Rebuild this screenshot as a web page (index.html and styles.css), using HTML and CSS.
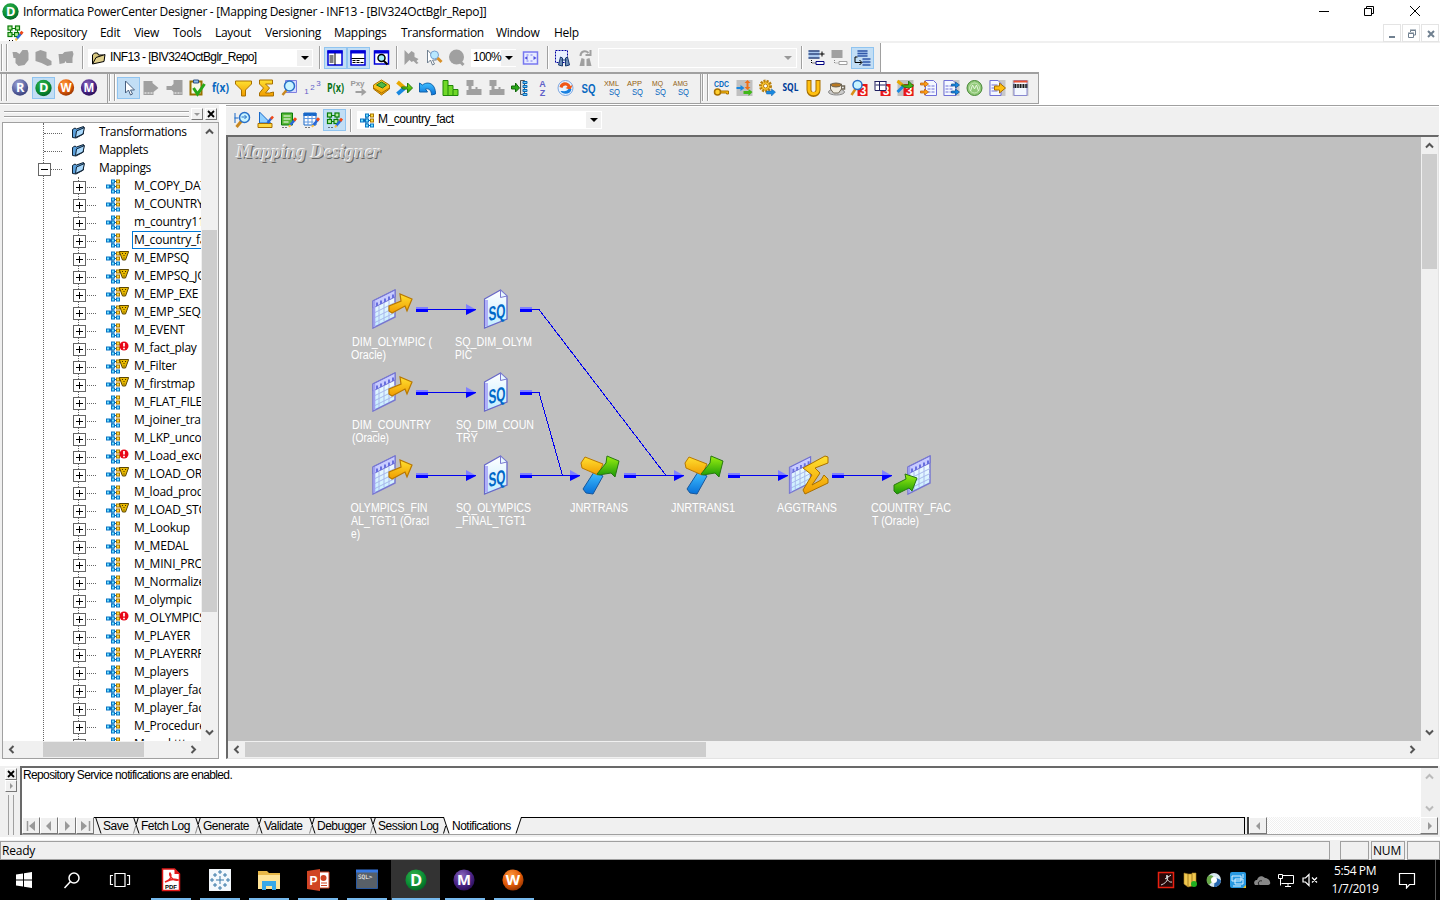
FILE: index.html
```html
<!DOCTYPE html>
<html lang="en">
<head>
<meta charset="utf-8">
<title>Informatica PowerCenter Designer</title>
<link rel="stylesheet" href="styles.css">
</head>
<body>
<svg class="defs" width="0" height="0">
  <defs>
    <radialGradient id="gG" cx=".4" cy=".3" r=".75"><stop offset="0" stop-color="#35b04c"/><stop offset=".6" stop-color="#0a8f35"/><stop offset="1" stop-color="#056022"/></radialGradient>
    <radialGradient id="gR" cx=".4" cy=".3" r=".75"><stop offset="0" stop-color="#a0a6d6"/><stop offset=".6" stop-color="#5d66a4"/><stop offset="1" stop-color="#353c76"/></radialGradient>
    <radialGradient id="gW" cx=".4" cy=".3" r=".75"><stop offset="0" stop-color="#ff9a40"/><stop offset=".6" stop-color="#e05a08"/><stop offset="1" stop-color="#8e3000"/></radialGradient>
    <radialGradient id="gM" cx=".4" cy=".3" r=".75"><stop offset="0" stop-color="#8a68bc"/><stop offset=".6" stop-color="#4a2486"/><stop offset="1" stop-color="#260c52"/></radialGradient>
    <linearGradient id="gy" x1="0" y1="0" x2="0" y2="1"><stop offset="0" stop-color="#ffe030"/><stop offset="1" stop-color="#f09c00"/></linearGradient>
    <linearGradient id="gg" x1="0" y1="0" x2="0" y2="1"><stop offset="0" stop-color="#9cf010"/><stop offset="1" stop-color="#189808"/></linearGradient>
    <linearGradient id="gb" x1="0" y1="0" x2="0" y2="1"><stop offset="0" stop-color="#40c0ff"/><stop offset="1" stop-color="#0870d8"/></linearGradient>
    <linearGradient id="gt" x1="0" y1="0" x2="0" y2="1"><stop offset="0" stop-color="#ffffff"/><stop offset="1" stop-color="#c0ecff"/></linearGradient>
  </defs>
  <symbol id="ballD" viewBox="0 0 20 20"><circle cx="10" cy="10" r="9.6" fill="url(#gG)"/><text x="10.2" y="15" class="ball">D</text></symbol>
  <symbol id="ballR" viewBox="0 0 20 20"><circle cx="10" cy="10" r="9.6" fill="url(#gR)"/><text x="10.2" y="15" class="ball">R</text></symbol>
  <symbol id="ballW" viewBox="0 0 20 20"><circle cx="10" cy="10" r="9.6" fill="url(#gW)"/><text x="10" y="14.800" class="ball w">W</text></symbol>
  <symbol id="ballM" viewBox="0 0 20 20"><circle cx="10" cy="10" r="9.6" fill="url(#gM)"/><text x="10" y="14.800" class="ball w">M</text></symbol>
  <symbol id="map" viewBox="0 0 15 15">
    <path d="M4 7.500h8M7 2.500h5M7 12.500h5M7 3L4 7M7 12L4 8M7 4v7" stroke="#0866b0" fill="none"/>
    <g fill="#70e0ff" stroke="#0874c4"><rect x=".5" y="6" width="3" height="3"/><rect x="5.500" y="1" width="3" height="3"/><rect x="5.500" y="6" width="3" height="3"/><rect x="5.500" y="11" width="3" height="3"/><rect x="10.500" y="11" width="3" height="3"/></g>
    <g fill="#ffe040" stroke="#a87400"><rect x="10.500" y="1" width="3" height="3"/><rect x="10.500" y="6" width="3" height="3"/></g>
  </symbol>
  <symbol id="warn" viewBox="0 0 10 10"><path d="M.3.500h9.400L6.500 9h-3z" fill="#e8b800" stroke="#5c4600"/><path d="M3 2.500h1M6 2.500h1M4.500 4.500h1M4.500 7h1" stroke="#403000"/></symbol>
  <symbol id="err" viewBox="0 0 10 10"><circle cx="5" cy="5" r="4.500" fill="#e80818"/><path d="M5 2v3.500M5 6.800v1.400" stroke="#fff" stroke-width="1.700"/></symbol>
  <symbol id="folder" viewBox="0 0 15 14"><path d="M1.500 12.500V4.500L4 3l1.500 1L12.500 1.500V9L5 13z" fill="#5aa0dc" stroke="#102030"/><path d="M4.500 12.500L5.500 6 13.500 2.500 12 9z" fill="#a8d8fc" stroke="#102030"/></symbol>
  <symbol id="grn" viewBox="0 0 18 18"><path d="M5 4.500h6M5 10.500h6M4.500 5v5M11.500 5v5" stroke="#087a08"/><g fill="#b8f0a0" stroke="#087a08" stroke-width="1.200"><rect x="2" y="2" width="4" height="4"/><rect x="9.500" y="2" width="4" height="4"/><rect x="2" y="8.500" width="4" height="4"/><rect x="8.500" y="8.500" width="4" height="4"/></g><path d="M10.500 15l5-6" stroke="#2868d8" stroke-width="2.600"/><path d="M14.500 10l2-2.400" stroke="#f04818" stroke-width="2.800"/><path d="M9.500 16.300l1.600-2" stroke="#ffc040" stroke-width="2"/><path d="M3 16.500h6" stroke="#000" stroke-dasharray="1 2"/></symbol>
  <symbol id="pencil" viewBox="0 0 18 18"><path d="M10.500 14.500l5-6" stroke="#2868d8" stroke-width="2.600"/><path d="M14.500 9.500l2-2.400" stroke="#f04818" stroke-width="2.800"/><path d="M9.500 16l1.600-2" stroke="#ffc040" stroke-width="2"/><path d="M3 16.500h6" stroke="#000" stroke-dasharray="1 2"/></symbol>
  <symbol id="up" viewBox="0 0 15 15"><path d="M4 9.500L7.500 6 11 9.500" fill="none" stroke="currentColor" stroke-width="2"/></symbol>
  <symbol id="dn" viewBox="0 0 15 15"><path d="M4 5.500L7.500 9 11 5.500" fill="none" stroke="currentColor" stroke-width="2"/></symbol>
  <symbol id="lf" viewBox="0 0 15 15"><path d="M9.500 4L6 7.500 9.500 11" fill="none" stroke="currentColor" stroke-width="2"/></symbol>
  <symbol id="rt" viewBox="0 0 15 15"><path d="M5.500 4L9 7.500 5.500 11" fill="none" stroke="currentColor" stroke-width="2"/></symbol>
  <symbol id="sep" viewBox="0 0 8 17"><path d="M0 0H1.500L7 16.500H0z" fill="#f0f0f0"/><path d="M1.500 0L7 16.500M6.500 0L4.300 7" stroke="#000" fill="none"/><path d="M3.700 9L1.500 16.500" stroke="#888"/><path d="M0 .5h8" stroke="#000"/></symbol>
  <symbol id="table" viewBox="0 0 25 40"><path d="M1 12L23 1v27L1 39z" fill="url(#gt)" stroke="#7878d0" stroke-width="1.500"/><path d="M1 12L23 1v7L1 19z" fill="#c8ccff" stroke="#7070d0"/><path d="M5 17V13.500M9 15v-3.500M13 13V9.500M17 11V7.500M21 9V5.500" stroke="#6870e0" stroke-width="2"/><path d="M2 24L23 13.500M2 29L23 18.500M2 34L23 23.500M7 17v18M12 14v18M17 12v18" stroke="#a8b8ec" fill="none"/><path d="M2.300 12v26" stroke="#a0a0f0" stroke-width="2"/></symbol>
  <symbol id="src" viewBox="0 0 42 40"><use href="#table" width="25" height="40"/><path d="M17 17L29 12 28 5 40 10 35 22 33 17 20 24 17 22z" fill="url(#gy)" stroke="#b87800" stroke-width="1.200"/></symbol>
  <symbol id="sqi" viewBox="0 0 25 40"><path d="M1 10L17 1l6.500 6v23L1 39z" fill="url(#gt)" stroke="#6868c8" stroke-width="1.300"/><path d="M3 11v26" stroke="#b0b0f8" stroke-width="3"/><path d="M17 1v7.500L23.500 7z" fill="#e8f8ff" stroke="#7878d0"/><text transform="translate(5 32) skewY(-12)" class="sqt" textLength="17" lengthAdjust="spacingAndGlyphs">SQ</text></symbol>
  <symbol id="jnr" viewBox="0 0 40 40"><path d="M3 34L14 17l9 4-10 18-7-1z" fill="url(#gb)" stroke="#18589c"/><path d="M1 8L5 2l18 7-5 11L2 13z" fill="url(#gy)" stroke="#b87800"/><path d="M17 19L26 8l1-7 12 5-4 16-4-4-12 2z" fill="url(#gg)" stroke="#287810"/></symbol>
  <symbol id="agg" viewBox="0 0 41 40"><use href="#table" width="25" height="38" y="1"/><path d="M15 13L37 1l3 1v6l-13 5 5 5-8 12 9-5 3-5 4 4v4L17 39l-2-4 9-15z" fill="url(#gy)" stroke="#a87000"/></symbol>
  <symbol id="tgt" viewBox="0 0 40 40"><use href="#table" width="25" height="40" x="14"/><path d="M1 30l12-6-1-5 12 4-5 13-3-3-12 6-3-3z" fill="url(#gg)" stroke="#287810"/></symbol>
</svg>

<header class="titlebar">
  <svg width="17" height="17"><use href="#ballD"/></svg>
  <span class="title">Informatica PowerCenter Designer - [Mapping Designer - INF13 - [BIV324OctBglr_Repo]]</span>
  <svg class="winbtns" width="110" height="20" fill="none" stroke="#000"><path d="M3 10.500h10M48.500 7.500h7v7h-7zM50.500 7.500v-2h7v7h-2M94 5l10 10M104 5l-10 10"/></svg>
</header>
<nav class="menubar">
  <svg width="18" height="18"><use href="#grn"/></svg>
  <span style="width:56px">Repository</span><span style="width:20px">Edit</span><span style="width:25px">View</span><span style="width:28px">Tools</span><span style="width:36px">Layout</span><span style="width:55px">Versioning</span><span style="width:53px">Mappings</span><span style="width:81px">Transformation</span><span style="width:44px">Window</span><span style="width:26px">Help</span>
  <div class="mdi">
    <svg width="18" height="18"><path d="M5 12h6" stroke="#708090" stroke-width="2"/></svg>
    <svg width="18" height="18" fill="none" stroke="#708090"><path d="M5.500 8.500h5v4h-5zM5 8h6M7.500 7V5.500h5V10H11M7 5h6"/></svg>
    <svg width="18" height="18"><path d="M6 6l6 6M12 6l-6 6" stroke="#708090" stroke-width="2"/></svg>
  </div>
</nav>

<section class="bar bar1">
  <i class="grip"></i>
  <svg class="ic" viewBox="0 0 18 18"><path d="M1 3h4l3 2 3-4h5l1 3v7l-4 5-6 1-3-3V9H2z" fill="#a0a0a0"/></svg>
  <svg class="ic" viewBox="0 0 18 18"><path d="M1 3l5-2 6 2v6l5 3v4l-4 1-6-3-6-2z" fill="#a0a0a0"/></svg>
  <svg class="ic" viewBox="0 0 18 18"><path d="M1 5h4l2-2 8-1 1 3-1 4v5H9l-1-2-1 2-5 1z" fill="#a0a0a0"/></svg>
  <i class="vsep s1"></i>
  <div class="combo repo"><svg width="16" height="16"><path d="M1.500 14V5l2-2h3l1 2h5v2" fill="#d8c880" stroke="#000"/><path d="M1.500 14L5 7.500l9-3-1 7z" fill="#e0d08c" stroke="#000"/></svg><span>INF13 - [BIV324OctBglr_Repo]</span><i class="dd"></i></div>
  <i class="vsep s2"></i>
  <svg class="ic on" viewBox="0 0 18 18"><path d="M1.500 2h14v14h-14z" fill="#fff" stroke="#0000d8" stroke-width="1.500"/><path d="M1 3h15" stroke="#0000d8" stroke-width="3"/><path d="M8.500 4v12M3 7h4M3 9h4M3 11h4M3 13h4" stroke="#000"/></svg>
  <svg class="ic on" viewBox="0 0 18 18"><path d="M1.500 2h14v14h-14z" fill="#fff" stroke="#0000d8" stroke-width="1.500"/><path d="M1 3h15" stroke="#0000d8" stroke-width="3"/><path d="M2 9.500h13" stroke="#000"/><path d="M3 11.500h8M3 13.500h11" stroke="#000" stroke-dasharray="3 1"/></svg>
  <svg class="ic" viewBox="0 0 18 18"><path d="M2 2h14v13H2z" fill="#fff" stroke="#0000d8" stroke-width="1.500"/><path d="M2 3h14" stroke="#0000d8" stroke-width="3"/><circle cx="9" cy="9" r="3.500" fill="#a0f0f8" stroke="#000" stroke-width="1.500"/><path d="M11 11.500l4 4" stroke="#000" stroke-width="2"/></svg>
  <i class="vsep s3"></i>
  <svg class="ic" viewBox="0 0 18 18"><path d="M3 1l4 4 3-3 3 2v4l4 2-2 2 2 2-2 1-3-3-2 1-2-2-2 2-3 3z" fill="#a0a0a0"/></svg>
  <svg class="ic" viewBox="0 0 18 18"><path d="M3 1v13l3-3 2 5 2-1-2-4h4z" fill="#fff" stroke="#708090"/><circle cx="10" cy="6" r="4" fill="#b8e8ff" stroke="#78a0d0"/><path d="M13 9l4 4" stroke="#d89028" stroke-width="3"/></svg>
  <svg class="ic" viewBox="0 0 18 18"><circle cx="9" cy="8" r="7.500" fill="#a0a0a0"/><path d="M12 12l4 4" stroke="#a0a0a0" stroke-width="3"/></svg>
  <div class="combo zoom"><span>100%</span><i class="dd"></i></div>
  <svg class="ic z" viewBox="0 0 18 18"><path d="M2 3h14v12H2z" fill="#e8ecff" stroke="#7878f0" stroke-width="1.500"/><path d="M3 9l3-2v4zM15 9l-3-2v4z" fill="#5050e0"/><path d="M5 6h8M5 12h8" stroke="#7878f0" stroke-dasharray="2 2"/></svg>
  <i class="vsep s4"></i>
  <svg class="ic" viewBox="0 0 18 18"><path d="M2 1.500h12v12H2z" fill="#e8f0ff" stroke="#0000a0" stroke-dasharray="2 1"/><path d="M5 16l2-8 2 1v8zM16 16l-2-8-2 1v8zM8 11h5" fill="#7090b8" stroke="#183870"/></svg>
  <svg class="ic" viewBox="0 0 18 18"><path d="M3 17l2-8 3 1v7zM15 17l-2-8-3 1v7z" fill="#a0a0a0"/><path d="M4 7c0-5 5-6 8-3M14 1v5H9" fill="none" stroke="#a0a0a0" stroke-width="2"/></svg>
  <div class="combo off"><i class="dd"></i></div>
  <i class="vsep s5"></i>
  <svg class="ic" viewBox="0 0 18 18"><path d="M1 1.500h11v8H1z" fill="#a8c8f0"/><path d="M1 2h11M1 5h11M1 9h11" stroke="#304880" stroke-width="1.500"/><path d="M12 5h5M14.500 2.500v5" stroke="#000"/><path d="M4 11v3h4" stroke="#000" stroke-dasharray="1 1" fill="none"/><path d="M8.500 12.500h8v3h-8z" fill="#fff" stroke="#000080"/></svg>
  <svg class="ic" viewBox="0 0 18 18"><path d="M1 1h11v8H1z" fill="#a0a0a0"/><path d="M4 11v3h4" stroke="#888" stroke-dasharray="1 1" fill="none"/><path d="M8.500 12.500h8v3h-8z" fill="#fff" stroke="#a0a0a0"/></svg>
  <svg class="ic on" viewBox="0 0 18 18"><path d="M4 1h10v6H4zM9 10h7v6H9z" fill="#a8c8f0"/><path d="M4 2h10M4 4.500h10M4 7h10M9 10h8M9 13h8M9 16h8" stroke="#3058a8" stroke-width="1.500"/><path d="M4 8H1.500v5.500H8M6 11l2.500 2.500L6 16" stroke="#000" fill="none"/></svg>
</section>

<section class="row2">
  <div class="bar barR">
    <i class="grip"></i>
    <svg class="ic" viewBox="0 0 18 18"><use href="#ballR" x="0" y="0" width="17" height="17"/></svg>
    <svg class="ic on" viewBox="0 0 18 18"><use href="#ballD" x=".5" y=".5" width="17" height="17"/></svg>
    <svg class="ic" viewBox="0 0 18 18"><use href="#ballW" x="0" y="0" width="17" height="17"/></svg>
    <svg class="ic" viewBox="0 0 18 18"><use href="#ballM" x="0" y="0" width="17" height="17"/></svg>
  </div>
  <div class="bar barT">
    <i class="grip"></i>
    <svg class="ic on" viewBox="0 0 18 18"><path d="M6 2v12l3-3 2 5 2-1-2-4h4z" fill="#fff" stroke="#486080"/></svg>
    <svg class="ic" viewBox="0 0 18 18"><path d="M1 2h9v2l6 5-5 4v3H1z" fill="#a0a0a0"/><path d="M2 14h8" stroke="#fff" stroke-dasharray="2 1"/></svg>
    <svg class="ic" viewBox="0 0 18 18"><path d="M8 1h9v15H8v-3l-2-2H1V7h5l2-2z" fill="#a0a0a0"/><path d="M9 14h7" stroke="#fff" stroke-dasharray="2 1"/></svg>
    <svg class="ic" viewBox="0 0 18 18"><path d="M2 2.500h11v13H2z" fill="#f8f8e8" stroke="#987000" stroke-width="2"/><path d="M5 1h5v3H5z" fill="#88b8e8" stroke="#305080"/><path d="M5 9l4 6L16 5" fill="none" stroke="#28a818" stroke-width="3"/></svg>
    <svg class="ic" viewBox="0 0 18 18"><text x="9" y="12.500" class="t blue big" textLength="17" lengthAdjust="spacingAndGlyphs">f(x)</text></svg>
    <svg class="ic" viewBox="0 0 18 18"><path d="M1 2h16v3l-6 6v6H7v-6L1 5z" fill="url(#gy)" stroke="#a87000"/></svg>
    <svg class="ic" viewBox="0 0 18 18"><path d="M2 1h13v4H8l4 4-4 5h4l4-1v4H2v-3l4-5-4-4z" fill="url(#gy)" stroke="#a87000"/></svg>
    <svg class="ic" viewBox="0 0 18 18"><path d="M5 1.500h11v12H5z" fill="#d8dcff" stroke="#8080e0"/><path d="M7 10l-5 6" stroke="#c88820" stroke-width="2.500"/><circle cx="9" cy="7" r="5" fill="#c8f4ff" stroke="#2870c8" stroke-width="1.500"/></svg>
    <svg class="ic" viewBox="0 0 18 18"><text x="3" y="15" class="t per">1</text><text x="9" y="11" class="t per">2</text><text x="15" y="7" class="t per">3</text></svg>
    <svg class="ic" viewBox="0 0 18 18"><text x="9" y="12.500" class="t green big" textLength="17" lengthAdjust="spacingAndGlyphs">P(x)</text></svg>
    <svg class="ic" viewBox="0 0 18 18"><text x="8" y="7" class="t gray" textLength="14">Pxy</text><path d="M6 12h6V9l5 4-5 4v-3H6z" fill="#a0a0a0"/></svg>
    <svg class="ic" viewBox="0 0 18 18"><path d="M1 6l8-5 8 5v4l-8 6-8-6z" fill="url(#gy)" stroke="#a87000"/><path d="M4 6l5-3 5 3-4 3z" fill="#50b848" stroke="#207818"/><path d="M1 9l8 5 8-5" fill="none" stroke="#a87000"/></svg>
    <svg class="ic" viewBox="0 0 18 18"><path d="M2 3l7 6" stroke="#e8a800" stroke-width="4"/><path d="M2 15l7-6" stroke="#1888e0" stroke-width="4"/><path d="M6 8h6V4l5 5-5 5v-4H7z" fill="url(#gg)" stroke="#287810"/></svg>
    <svg class="ic" viewBox="0 0 18 18"><path d="M1 4l3 2c5-4 13-2 13 9l-4 1c0-5-3-7-6-6l2 3H1z" fill="url(#gb)" stroke="#1060a8"/></svg>
    <svg class="ic" viewBox="0 0 18 18"><path d="M1.500 1.500h5v5h5v4h5v6h-15zM6.500 6v10M11.500 11v5" fill="#70d828" stroke="#208808"/></svg>
    <svg class="ic" viewBox="0 0 18 18"><path d="M2 1h7v6H7v3h4V8h2v2h4v6H2v-5h2V7H2z" fill="#a0a0a0"/></svg>
    <svg class="ic" viewBox="0 0 18 18"><path d="M2 1h7v6H7v3h4V8h2v2h4v6H2v-5h2V7H2z" fill="#a0a0a0"/></svg>
    <svg class="ic" viewBox="0 0 18 18"><path d="M1 7h4V4l4 5-4 4v-3H1z" fill="#28a818" stroke="#106808"/><path d="M10 1.500h4v14h-4z" fill="#ddd" stroke="#555"/><path d="M12.500 2.500h4v2h-4zM12.500 6.500h4v2h-4zM12.500 10.500h4v2h-4zM12.500 14.500h4v2h-4z" fill="#70c8f0" stroke="#0868b8"/></svg>
    <svg class="ic" viewBox="0 0 18 18"><text x="9" y="8" class="t per b">A</text><text x="9" y="16.500" class="t per b">Z</text></svg>
    <svg class="ic" viewBox="0 0 18 18"><circle cx="9" cy="9" r="7.500" fill="#e8f4ff" stroke="#80a8e0"/><path d="M3 8c1-6 9-6 11-1l2-1-2 5-5-2 2-1c-1-2-4-2-5 1z" fill="#f05818"/><path d="M15 10c-1 6-9 6-11 2 3 0 6 1 8-2z" fill="#1880e0"/></svg>
    <svg class="ic" viewBox="0 0 18 18"><text x="9" y="13.500" class="t blue sq" textLength="14" lengthAdjust="spacingAndGlyphs">SQ</text></svg>
    <svg class="ic" viewBox="0 0 18 18"><text x="9" y="7" class="t brown" textLength="15" lengthAdjust="spacingAndGlyphs">XML</text><text x="12" y="15.500" class="t blue sm" textLength="11" lengthAdjust="spacingAndGlyphs">SQ</text></svg>
    <svg class="ic" viewBox="0 0 18 18"><text x="9" y="7" class="t brown" textLength="15" lengthAdjust="spacingAndGlyphs">APP</text><text x="12" y="15.500" class="t blue sm" textLength="11" lengthAdjust="spacingAndGlyphs">SQ</text></svg>
    <svg class="ic" viewBox="0 0 18 18"><text x="9" y="7" class="t brown" textLength="11" lengthAdjust="spacingAndGlyphs">MQ</text><text x="12" y="15.500" class="t blue sm" textLength="11" lengthAdjust="spacingAndGlyphs">SQ</text></svg>
    <svg class="ic" viewBox="0 0 18 18"><text x="9" y="7" class="t brown" textLength="15" lengthAdjust="spacingAndGlyphs">AMG</text><text x="12" y="15.500" class="t blue sm" textLength="11" lengthAdjust="spacingAndGlyphs">SQ</text></svg>
  </div>
  <div class="bar barA">
    <i class="grip"></i>
    <svg class="ic" viewBox="0 0 18 18"><text x="9" y="8" class="t blue cdc" textLength="15" lengthAdjust="spacingAndGlyphs">CDC</text><path d="M7 12h9v3h-2v-1H7" fill="#ffc010" stroke="#a87000"/><circle cx="5" cy="13" r="3" fill="#ffd030" stroke="#a87000" stroke-width="1.500"/></svg>
    <svg class="ic" viewBox="0 0 18 18"><path d="M1 1h16v16H1z" fill="#c0c0c0"/><path d="M1 8h4V6l4 3-4 3v-2H1z" fill="#1888e0"/><path d="M12 1l3 3h-2v4h2l-3 3-3-3h2V4H9z" fill="#f07018"/><path d="M8 12h5v-2l4 3-4 4v-2H8z" fill="#40b818"/></svg>
    <svg class="ic" viewBox="0 0 18 18"><circle cx="7" cy="7" r="5" fill="#ffc830" stroke="#b88010" stroke-width="3" stroke-dasharray="2 1"/><circle cx="7" cy="7" r="2" fill="#fff" stroke="#b88010"/><path d="M8 12h5v-2l4 3-4 4v-2H8z" fill="#1888e0" stroke="#1060a8" stroke-width=".5"/></svg>
    <svg class="ic" viewBox="0 0 18 18"><text x="9" y="12" class="t navy" textLength="16" lengthAdjust="spacingAndGlyphs">SQL</text></svg>
    <svg class="ic" viewBox="0 0 18 18"><path d="M4.500 1v10c0 6 9 6 9 0V1" fill="none" stroke="#a87000" stroke-width="5"/><path d="M4.500 2v9c0 5 9 5 9 0V2" fill="none" stroke="#ffc010" stroke-width="3"/></svg>
    <svg class="ic" viewBox="0 0 18 18"><ellipse cx="9" cy="13" rx="8" ry="3" fill="#ccc" stroke="#888"/><path d="M3 5h11v5l-3 4H6l-3-4z" fill="#f0ece0" stroke="#706858"/><ellipse cx="8.500" cy="6" rx="5" ry="2" fill="#b87820" stroke="#706858"/><path d="M14 7h3v3h-3" fill="none" stroke="#706858" stroke-width="1.500"/></svg>
    <svg class="ic" viewBox="0 0 18 18"><path d="M7 5h10v12H7z" fill="#e81818"/><text x="12.500" y="16" class="t white">3</text><path d="M5 10l-4 6" stroke="#d89018" stroke-width="2.500"/><circle cx="7" cy="6" r="4.500" fill="#c8f4ff" stroke="#2870c8" stroke-width="1.500"/></svg>
    <svg class="ic" viewBox="0 0 18 18"><path d="M7 5h10v12H7z" fill="#e81818"/><text x="12.500" y="16" class="t white">3</text><path d="M1.500 2.500h11v9h-11z" fill="#fff" stroke="#202060"/><path d="M1 2.500h12M2 6h10M6 3v8" stroke="#202060"/></svg>
    <svg class="ic" viewBox="0 0 18 18"><path d="M1 1h16v16H1z" fill="#c0c0c0"/><path d="M7 5h10v12H7z" fill="#e81818"/><text x="12.500" y="16" class="t white">3</text><path d="M1 2l6 5" stroke="#e8a800" stroke-width="3"/><path d="M1 13l6-6" stroke="#1888e0" stroke-width="3"/><path d="M5 6h7V2l5 5-4 2-6-1z" fill="#40b818" stroke="#287810"/></svg>
    <svg class="ic" viewBox="0 0 18 18"><path d="M6 1.500h8l3 3v12H6z" fill="#f4f8ff" stroke="#7070d8"/><path d="M8 7h7M8 10h7M8 13h7" stroke="#7070d8" stroke-dasharray="3 1"/><path d="M1 4h4V2l4 3-4 3V6H1zM1 12h4v-2l4 3-4 3v-2H1z" fill="#ffa010" stroke="#b85808" stroke-width=".7"/></svg>
    <svg class="ic" viewBox="0 0 18 18"><path d="M1 1h16v16H1z" fill="#c8c8c8"/><path d="M1.500 1.500h9l3 3v12h-12z" fill="#f4f8ff" stroke="#7070d8"/><path d="M3 7h7M3 10h7M3 13h7" stroke="#7070d8" stroke-dasharray="3 1"/><path d="M9 5h4V3l4 3-4 3V7H9zM9 12h4v-2l4 3-4 3v-2H9z" fill="#1888e0" stroke="#105090" stroke-width=".7"/></svg>
    <svg class="ic" viewBox="0 0 18 18"><circle cx="9" cy="9" r="7.500" fill="#90c878" stroke="#488838"/><circle cx="9" cy="9" r="5" fill="none" stroke="#c8e8b8"/><path d="M5 12l2-6 2 4 2-4 2 6" fill="none" stroke="#e8f8e0"/></svg>
    <svg class="ic" viewBox="0 0 18 18"><path d="M1 1h16v16H1z" fill="#c8c8c8"/><path d="M1.500 1.500h8l3 3v12h-11z" fill="#f4f8ff" stroke="#7070d8"/><path d="M3 6h6M3 9h3M3 12h6" stroke="#7070d8"/><path d="M6 7h5V4l6 5-6 5v-3H6z" fill="#ffc010" stroke="#a87000"/></svg>
    <svg class="ic" viewBox="0 0 18 18"><path d="M1 1h16v16H1z" fill="#c8c8c8"/><path d="M2.500 1.500h13v15h-13z" fill="#f4f8ff" stroke="#8888d0"/><path d="M2 2.500h14" stroke="#e85030" stroke-width="2"/><path d="M2 6h14M2 8h14" stroke="#000" stroke-width="2" stroke-dasharray="1 .6"/></svg>
  </div>
</section>

<main class="work">
  <aside class="nav">
    <div class="navhead"><i class="lines"></i><b class="hb"><svg width="9" height="9"><path d="M1 3h6L4 6z" fill="#999"/></svg></b><b class="hb"><svg width="9" height="9"><path d="M1 1l6 6M7 1L1 7" stroke="#000" stroke-width="1.800"/></svg></b></div>
    <div class="treebox">
      <div class="treerow">
        <div class="tree">
          <div class="fold"><svg><use href="#folder"/></svg>Transformations</div>
          <div class="fold"><svg><use href="#folder"/></svg>Mapplets</div>
          <div class="fold open"><svg><use href="#folder"/></svg>Mappings</div>
          <div class="kids">
          <div class="m"><svg><use href="#map"/></svg><span>M_COPY_DATA</span></div>
          <div class="m"><svg><use href="#map"/></svg><span>M_COUNTRY</span></div>
          <div class="m"><svg><use href="#map"/></svg><span>m_country11</span></div>
          <div class="m sel"><svg><use href="#map"/></svg><span>M_country_fact</span></div>
          <div class="m"><svg><use href="#map"/></svg><svg class="bd"><use href="#warn"/></svg><span>M_EMPSQ</span></div>
          <div class="m"><svg><use href="#map"/></svg><svg class="bd"><use href="#warn"/></svg><span>M_EMPSQ_JOIN</span></div>
          <div class="m"><svg><use href="#map"/></svg><svg class="bd"><use href="#warn"/></svg><span>M_EMP_EXE</span></div>
          <div class="m"><svg><use href="#map"/></svg><svg class="bd"><use href="#warn"/></svg><span>M_EMP_SEQ_</span></div>
          <div class="m"><svg><use href="#map"/></svg><span>M_EVENT</span></div>
          <div class="m"><svg><use href="#map"/></svg><svg class="bd"><use href="#err"/></svg><span>M_fact_play</span></div>
          <div class="m"><svg><use href="#map"/></svg><svg class="bd"><use href="#warn"/></svg><span>M_Filter</span></div>
          <div class="m"><svg><use href="#map"/></svg><svg class="bd"><use href="#warn"/></svg><span>M_firstmap</span></div>
          <div class="m"><svg><use href="#map"/></svg><span>M_FLAT_FILE</span></div>
          <div class="m"><svg><use href="#map"/></svg><span>M_joiner_trans</span></div>
          <div class="m"><svg><use href="#map"/></svg><span>M_LKP_uncon</span></div>
          <div class="m"><svg><use href="#map"/></svg><svg class="bd"><use href="#err"/></svg><span>M_Load_excel</span></div>
          <div class="m"><svg><use href="#map"/></svg><svg class="bd"><use href="#warn"/></svg><span>M_LOAD_ORA</span></div>
          <div class="m"><svg><use href="#map"/></svg><span>M_load_produ</span></div>
          <div class="m"><svg><use href="#map"/></svg><svg class="bd"><use href="#warn"/></svg><span>M_LOAD_STO</span></div>
          <div class="m"><svg><use href="#map"/></svg><span>M_Lookup</span></div>
          <div class="m"><svg><use href="#map"/></svg><span>M_MEDAL</span></div>
          <div class="m"><svg><use href="#map"/></svg><span>M_MINI_PROJ</span></div>
          <div class="m"><svg><use href="#map"/></svg><span>M_Normalizer</span></div>
          <div class="m"><svg><use href="#map"/></svg><span>M_olympic</span></div>
          <div class="m"><svg><use href="#map"/></svg><svg class="bd"><use href="#err"/></svg><span>M_OLYMPICS</span></div>
          <div class="m"><svg><use href="#map"/></svg><span>M_PLAYER</span></div>
          <div class="m"><svg><use href="#map"/></svg><span>M_PLAYERRR</span></div>
          <div class="m"><svg><use href="#map"/></svg><span>M_players</span></div>
          <div class="m"><svg><use href="#map"/></svg><span>M_player_fact</span></div>
          <div class="m"><svg><use href="#map"/></svg><span>M_player_fact</span></div>
          <div class="m"><svg><use href="#map"/></svg><span>M_Procedure</span></div>
          <div class="m"><svg><use href="#map"/></svg><span>M_rankttt</span></div>
          </div>
        </div>
        <div class="vs"><svg><use href="#up"/></svg><i class="thumb t1"></i><svg class="end"><use href="#dn"/></svg></div>
      </div>
      <div class="hs h1"><svg><use href="#lf"/></svg><i class="thumb t2"></i><svg><use href="#rt"/></svg></div>
    </div>
  </aside>
  <section class="desk">
    <div class="dbar">
      <svg class="ic" viewBox="0 0 18 18"><path d="M1.500 2v10M1 7h4" stroke="#1868c8"/><path d="M8 10l-5 6" stroke="#c88820" stroke-width="3"/><circle cx="11" cy="6.500" r="5" fill="#c8f4ff" stroke="#2870c8" stroke-width="1.500"/><path d="M8 6h5M11 4l2 2-2 2" stroke="#2870c8" fill="none"/></svg>
      <svg class="ic" viewBox="0 0 18 18"><path d="M3 1v11h11z" fill="#90d0ff" stroke="#1868c8"/><path d="M1.500 12.500h14v4h-14z" fill="#ffd840" stroke="#a87000"/><path d="M11 12l4-5" stroke="#2868d8" stroke-width="2.500"/><path d="M14.500 8l2-2.500" stroke="#f04818" stroke-width="2.500"/></svg>
      <svg class="ic" viewBox="0 0 18 18"><path d="M2 2h11v12H2z" fill="#58b838" stroke="#087a08"/><path d="M4 5h7M4 8h7M4 11h5" stroke="#fff"/><use href="#pencil"/></svg>
      <svg class="ic" viewBox="0 0 18 18"><path d="M1.500 2h12v12h-12z" fill="#fff" stroke="#1868c8"/><path d="M1 3.500h13" stroke="#1868c8" stroke-width="3"/><path d="M1 7.500h13M1 11h10M5.500 4v10M9.500 4v10" stroke="#6098e0"/><use href="#pencil"/></svg>
      <svg class="ic on" viewBox="0 0 18 18"><use href="#grn"/></svg>
      <i class="vsep s6"></i>
      <div class="combo mp"><svg width="15" height="15"><use href="#map"/></svg><span>M_country_fact</span><i class="dd"></i></div>
    </div>
    <div class="frame">
      <div class="canvasrow">
        <svg class="canvas" width="1193" height="604" viewBox="228 137 1193 604">
          <text x="237.500" y="158.500" class="wm hi" textLength="144" lengthAdjust="spacingAndGlyphs">Mapping Designer</text>
          <text x="235.500" y="156.500" class="wm lo" textLength="144" lengthAdjust="spacingAndGlyphs">Mapping Designer</text>
          <text x="236.500" y="157.500" class="wm" textLength="144" lengthAdjust="spacingAndGlyphs">Mapping Designer</text>
          <g stroke="#0000f0" fill="none" shape-rendering="crispEdges">
            <path d="M428 309.500h38M532 309.500h7l127 166M428 392.500h38M532 392.500h7l23.500 83M428 475.500h38M532 475.500h38M636 475.500h38M740 475.500h38M844 475.500h38"/>
          </g>
          <defs>
            <g id="out"><path d="M0-3h12v2H0z" fill="#8080ff"/><path d="M0-1h12v3H0z" fill="#0000ff"/></g>
            <g id="in"><path d="M0-5.500L10 0H0z" fill="#8080ff"/><path d="M0-.5h10v1L0 5.500z" fill="#0000ff"/></g>
          </defs>
          <use href="#out" x="416" y="310"/><use href="#in" x="466" y="309.500"/><use href="#out" x="520" y="310"/>
          <use href="#out" x="416" y="393"/><use href="#in" x="466" y="392.500"/><use href="#out" x="520" y="393"/>
          <use href="#out" x="416" y="476"/><use href="#in" x="466" y="475.500"/><use href="#out" x="520" y="476"/>
          <use href="#in" x="570" y="475.500"/><use href="#out" x="624" y="476"/><use href="#in" x="674" y="475.500"/>
          <use href="#out" x="728" y="476"/><use href="#in" x="778" y="475.500"/><use href="#out" x="832" y="476"/><use href="#in" x="882" y="475.500"/>
          <use href="#src" x="372" y="289" width="42" height="40"/><use href="#sqi" x="483.500" y="289" width="25" height="40"/>
          <use href="#src" x="372" y="372" width="42" height="40"/><use href="#sqi" x="483.500" y="372" width="25" height="40"/>
          <use href="#src" x="372" y="455" width="42" height="40"/><use href="#sqi" x="483.500" y="455" width="25" height="40"/>
          <use href="#jnr" x="580" y="455" width="40" height="40"/><use href="#jnr" x="684" y="455" width="40" height="40"/>
          <use href="#agg" x="788" y="455" width="41" height="40"/><use href="#tgt" x="893" y="455" width="40" height="40"/>
          <g class="lbl">
            <text x="352" y="346" textLength="80" lengthAdjust="spacingAndGlyphs">DIM_OLYMPIC (</text><text x="351" y="359" textLength="35" lengthAdjust="spacingAndGlyphs">Oracle)</text>
            <text x="455" y="346" textLength="77" lengthAdjust="spacingAndGlyphs">SQ_DIM_OLYM</text><text x="455" y="359" textLength="17" lengthAdjust="spacingAndGlyphs">PIC</text>
            <text x="352" y="429" textLength="79" lengthAdjust="spacingAndGlyphs">DIM_COUNTRY</text><text x="352" y="442" textLength="37" lengthAdjust="spacingAndGlyphs">(Oracle)</text>
            <text x="456" y="429" textLength="78" lengthAdjust="spacingAndGlyphs">SQ_DIM_COUN</text><text x="456" y="442" textLength="22" lengthAdjust="spacingAndGlyphs">TRY</text>
            <text x="350.500" y="512" textLength="77" lengthAdjust="spacingAndGlyphs">OLYMPICS_FIN</text><text x="351" y="525" textLength="78" lengthAdjust="spacingAndGlyphs">AL_TGT1 (Oracl</text><text x="351" y="538" textLength="9" lengthAdjust="spacingAndGlyphs">e)</text>
            <text x="456" y="512" textLength="75" lengthAdjust="spacingAndGlyphs">SQ_OLYMPICS</text><text x="456" y="525" textLength="70" lengthAdjust="spacingAndGlyphs">_FINAL_TGT1</text>
            <text x="570" y="512" textLength="58" lengthAdjust="spacingAndGlyphs">JNRTRANS</text><text x="671" y="512" textLength="64" lengthAdjust="spacingAndGlyphs">JNRTRANS1</text>
            <text x="777" y="512" textLength="60" lengthAdjust="spacingAndGlyphs">AGGTRANS</text>
            <text x="871" y="512" textLength="80" lengthAdjust="spacingAndGlyphs">COUNTRY_FAC</text><text x="872" y="525" textLength="47" lengthAdjust="spacingAndGlyphs">T (Oracle)</text>
          </g>
        </svg>
        <div class="vs v2"><svg><use href="#up"/></svg><i class="thumb t3"></i><svg class="end"><use href="#dn"/></svg></div>
      </div>
      <div class="hs h2"><svg><use href="#lf"/></svg><i class="thumb t4"></i><svg><use href="#rt"/></svg></div>
    </div>
  </section>
</main>

<section class="output">
  <div class="oside"><b class="hb"><svg width="9" height="9"><path d="M1 1l6 6M7 1L1 7" stroke="#000" stroke-width="1.800"/></svg></b><b class="hb"><svg width="9" height="9"><path d="M3 1l3 3-3 3z" fill="#999"/></svg></b><i class="vlines"></i></div>
  <div class="obox">
    <div class="otop"><p>Repository Service notifications are enabled.</p><div class="vs dim"><svg><use href="#up"/></svg><svg class="end"><use href="#dn"/></svg></div></div>
    <div class="tabs">
      <b class="nb"><svg width="14" height="12"><path d="M3.500 1v10" stroke="#999" stroke-width="1.500"/><path d="M11 1v10L5 6z" fill="#999"/></svg></b><b class="nb"><svg width="14" height="12"><path d="M9 1v10L4 6z" fill="#999"/></svg></b><b class="nb"><svg width="14" height="12"><path d="M5 1v10l5-5z" fill="#999"/></svg></b><b class="nb"><svg width="14" height="12"><path d="M3 1v10l6-5z" fill="#999"/><path d="M11.500 1v10" stroke="#999" stroke-width="1.500"/></svg></b>
      <svg class="sp" width="8" height="17"><path d="M1.500 0L7 16.500M0 .5h8" stroke="#000"/></svg><span style="width:30px">Save</span>
      <svg class="sp"><use href="#sep"/></svg><span style="width:54px">Fetch Log</span>
      <svg class="sp"><use href="#sep"/></svg><span style="width:53px">Generate</span>
      <svg class="sp"><use href="#sep"/></svg><span style="width:45px">Validate</span>
      <svg class="sp"><use href="#sep"/></svg><span style="width:53px">Debugger</span>
      <svg class="sp"><use href="#sep"/></svg><span style="width:65px">Session Log</span>
      <svg class="sp w"><path d="M0 0h2l5 17H0z" fill="#f0f0f0"/><path d="M1.500 0L7 16.500M3.700 9L1.500 16.500M0 .5h2" stroke="#000"/></svg><span class="act" style="width:65px">Notifications</span>
      <svg class="sp w"><path d="M8 0H6L1 17h7z" fill="#f0f0f0"/><path d="M6.500 0L1 16.500M6 .5h2" stroke="#000"/></svg>
      <i class="rest"></i><i class="split"></i><b class="nb"><svg width="14" height="12"><path d="M9 2v8L5 6z" fill="#999"/></svg></b><i class="track"></i><b class="nb"><svg width="14" height="12"><path d="M6 2v8l4-4z" fill="#999"/></svg></b>
    </div>
  </div>
</section>

<footer class="status"><span class="p0">Ready</span><span class="p1"></span><span class="p2">NUM</span><span class="p3"></span></footer>

<section class="taskbar">
  <div class="sys"><svg width="18" height="18" fill="#fff"><path d="M1 3.500L8 2.500v6H1zM9 2.300L17 1v7.500H9zM1 9.500h7v6L1 14.500zM9 9.500h8V17l-8-1.300z"/></svg></div>
  <div class="sys"><svg width="18" height="18" fill="none" stroke="#fff" stroke-width="1.500"><circle cx="11" cy="7" r="5"/><path d="M7.500 10.500L1.500 17"/></svg></div>
  <div class="sys"><svg width="22" height="18" fill="none" stroke="#fff" stroke-width="1.200"><path d="M6 2.500h10v13H6zM4 4.500H1.500v9H4M18 4.500h2.500v9H18"/></svg></div>
  <div class="app first"><svg width="24" height="24"><path d="M3.500 1h12l5 5v16.500h-17z" fill="#fff" stroke="#e01818" stroke-width="1.500"/><path d="M15.500 1v5h5z" fill="#e01818"/><path d="M6 14c8-3 6-8 5-9-2 2 4 9 8 7-4-2-9 0-13 2z" fill="none" stroke="#e82020" stroke-width="1.400"/><text x="12" y="21" class="pdf">PDF</text></svg></div>
  <div class="app"><svg width="24" height="24"><path d="M1 1h22v22H1z" fill="#f4f8fc"/><path d="M12 8v8M8 12h8M12 2v4M10 4h4M12 18v4M10 20h4M4 10v4M2 12h4M20 10v4M18 12h4M7 5v4M5 7h4M17 5v4M15 7h4M7 15v4M5 17h4M17 15v4M15 17h4" stroke="#3878a8"/></svg></div>
  <div class="app"><svg width="24" height="24"><path d="M1 3h9l2 2h11v16H1z" fill="#e8b848"/><path d="M1 7h22v14H1z" fill="#ffe498"/><path d="M5 13h14v9h-4v-4H9v4H5z" fill="#38a8e8"/></svg></div>
  <div class="app"><svg width="24" height="24"><path d="M12 4h11v16H12z" fill="#fff" stroke="#d04423"/><path d="M15 15h6M15 17.500h6" stroke="#d04423"/><circle cx="17.500" cy="10" r="3" fill="#d04423"/><path d="M1 3l13-2v22L1 21z" fill="#d04423"/><text x="7.500" y="16.500" class="pp">P</text></svg></div>
  <div class="app"><svg width="24" height="24"><path d="M1.500 2.500h21v18h-21z" fill="#586068" stroke="#2858a0"/><path d="M1 3h22" stroke="#3878e0" stroke-width="3"/><text x="3" y="11" class="sql">SQL&gt;</text></svg></div>
  <div class="app cur"><svg width="24" height="24"><use href="#ballD" x="1" y="1" width="22" height="22"/></svg></div>
  <div class="app"><svg width="24" height="24"><use href="#ballM" x="0" y="1" width="22" height="22"/></svg></div>
  <div class="app"><svg width="24" height="24"><use href="#ballW" x="0" y="1" width="22" height="22"/></svg></div>
  <div class="tray">
    <svg viewBox="0 0 18 18"><path d="M1.500 1.500h15v15h-15z" fill="#280808" stroke="#e82010" stroke-width="1.500"/><path d="M4 14c8-3 7-8 6-10-2 3 2 8 5 7M8 8l6-4" fill="none" stroke="#ddd"/></svg>
    <svg viewBox="0 0 18 18"><path d="M3 2l4 1v13l-4-3zM7 3h4v12l-4 1zM11 2h4v11l-4 2z" fill="#f0c850" stroke="#a88020" stroke-width=".6"/><circle cx="13" cy="13" r="3" fill="#20b020"/></svg>
    <svg viewBox="0 0 18 18"><circle cx="9" cy="9" r="7" fill="#d8e8f0"/><path d="M3 5c4-2 6 0 6 4L4 14C1 11 1 8 3 5z" fill="#68a848"/><path d="M10 7c3 0 6 2 6 3-1 4-4 6-7 6z" fill="#2868b0"/><circle cx="9" cy="9" r="3" fill="#fff"/></svg>
    <svg viewBox="0 0 18 18"><rect x="1" y="1" width="16" height="16" rx="2" fill="#2898e0"/><path d="M3 5h9v5H3zM6 8h8v5H6zM4 15h8M14 3v4" fill="none" stroke="#d8f0ff"/><path d="M14 17l3-3v3z" fill="#e8c020"/></svg>
    <svg viewBox="0 0 18 18"><path d="M2 14c-2-3 0-5 2-5 1-4 5-5 8-2 2 0 5 2 5 4 1 2-1 3-2 3z" fill="#888"/><path d="M6 14c-2-3 1-5 3-4" stroke="#222" fill="none"/></svg>
    <svg viewBox="0 0 18 18" fill="none" stroke="#fff"><path d="M5.500 4.500h11v8H4.500M8 15.500h6M11 12.500v3M1.500 3.500h4v4h-4zM3.500 7.500v7"/></svg>
    <svg viewBox="0 0 18 18" fill="none" stroke="#fff"><path d="M2 7h2.500L8 3.500v11L4.500 11H2zM11 6.500l5 5M16 6.500l-5 5" stroke-width="1.200"/></svg>
  </div>
  <div class="clock"><span>5:54 PM</span><span>1/7/2019</span></div>
  <svg class="note" width="18" height="18"><path d="M1.500 2.500h15v11h-5L8.500 17v-3.500h-7z" fill="none" stroke="#fff" stroke-width="1.200"/></svg>
  <i class="peek"></i>
</section>
</body>
</html>
```

FILE: styles.css
```css
* { box-sizing: border-box; }
body { margin: 0; width: 1440px; height: 900px; overflow: hidden; background: #fff; color: #000; font: 12px/18px "Open Sans", "Noto Sans", sans-serif; display: flex; flex-direction: column; }
svg { display: block; flex: none; }
i, b { display: block; flex: none; font-style: normal; }
span { white-space: nowrap; }
.defs { position: absolute; }
.ball { font: bold 15px "Open Sans", sans-serif; fill: #fff; text-anchor: middle; }
.ball.w { font-size: 13.5px; }

.titlebar { height: 24px; flex: none; display: flex; align-items: center; padding: 0 14px 1px 2px; }
.title { margin-left: 4px; letter-spacing: -.29px; }
.winbtns { margin-left: auto; margin-top: -2px; }
.menubar { height: 19px; flex: none; display: flex; align-items: center; padding-left: 6px; border-bottom: 2px solid #f0f0f0; gap: 14px; }
.menubar > svg { margin-right: -8px; }
.menubar > span { letter-spacing: -.3px; }
.mdi { margin-left: auto; display: flex; gap: 1px; padding-right: 1px; }
.mdi svg { border: 1px solid #e4e4e4; }

.bar { background: #f0f0f0; display: flex; align-items: center; flex: none; }
.bar1 { width: 881px; height: 29px; border-right: 1px solid #a0a0a0; }
.grip { width: 6px; height: 27px; margin: 0 2px 0 1px; border: solid #a0a0a0; border-width: 0 1px; box-shadow: inset 1px 0 #fff, 1px 0 #fff; }
.ic { width: 23px; height: 22px; padding: 1px; border: 1px solid transparent; overflow: visible; }
.ic.on { background: #c2def5; border-color: #90c4f0; }
.vsep { width: 2px; height: 23px; border-left: 1px solid #a0a0a0; border-right: 1px solid #fff; }
.s1 { margin: 0 4px 0 4px; }
.s2 { margin: 0 3px 0 6px; }
.s3 { margin: 0 1px 0 3px; }
.s4 { margin: 0 2px 0 5px; }
.s5 { margin: 0 2px 0 4px; }
.s6 { margin: 0 5px 0 4px; }
.combo { display: flex; align-items: center; background: #fff; height: 18px; font: 12px/16px "Liberation Sans", sans-serif; }
.combo span { flex: 1; letter-spacing: -.65px; position: relative; top: -1px; }
.dd { width: 15px; height: 16px; background: #f0f0f0; margin-right: 1px; display: flex; align-items: center; justify-content: center; }
.dd::after { content: ""; border: 4px solid transparent; border-top-color: #000; border-bottom: 0; }
.repo { width: 225px; padding-left: 3px; }
.repo span { margin-left: 3px; }
.zoom { width: 45px; margin-left: 3px; padding-left: 2px; }
.z { margin-left: 3px; }
.off { width: 199px; height: 20px; background: #f0f0f0; border: 1px solid #fff; justify-content: flex-end; margin-left: 1px; }
.off .dd::after { border-top-color: #999; }
.mp span { letter-spacing: -.45px; }
.row2 { display: flex; height: 32px; flex: none; }
.row2 .bar { height: 32px; padding-bottom: 2px; border: 1px solid #a0a0a0; border-left: 0; border-top-width: 2px; }
.barR { width: 108px; }
.barT { width: 593px; }
.barA { width: 338px; }
.t { font: 8px "Liberation Sans", sans-serif; text-anchor: middle; }
.blue { fill: #0868c0; }
.brown { fill: #906010; font: 7.5px "Liberation Sans", sans-serif; }
.green { fill: #087018; }
.gray { fill: #999; font-weight: bold; }
.big { font: bold 12px "Open Sans", sans-serif; }
.sq { font: bold 13px "Liberation Sans", sans-serif; }
.sm { font: 9px "Liberation Sans", sans-serif; }
.cdc { font: bold 9px "Liberation Sans", sans-serif; }
.navy { fill: #003c98; font: bold 10px "Open Sans", sans-serif; }
.per { fill: #6060c8; }
.per.b { font-weight: bold; font-size: 9px; }
.white { fill: #fff; font: bold 12px "Liberation Sans", sans-serif; }

.work { display: flex; height: 654px; margin-top: 1px; gap: 7px; padding-right: 1px; flex: none; }
.nav { width: 219px; background: #f0f0f0; padding: 0 0 0 2px; }
.navhead { height: 17px; display: flex; align-items: center; gap: 2px; padding: 0 2px 0 2px; }
.lines { flex: 1; height: 6px; border: solid #a0a0a0; border-width: 1px 0; box-shadow: 0 1px #fff, inset 0 1px #fff; }
.hb { width: 12px; height: 12px; padding: 1px; background: #f0f0f0; border: 1px solid #fff; border-right-color: #777; border-bottom-color: #777; }
.treebox { width: 217px; height: 637px; border: 1px solid #a0a0a0; background: #fff; }
.treerow { display: flex; height: 618px; }
.tree { width: 198px; height: 618px; overflow: hidden; letter-spacing: -.22px; position: relative; }
.tree::before { content: ""; position: absolute; left: 40px; top: 0; height: 100%; border-left: 1px dotted #666; }
.fold { height: 18px; display: flex; align-items: center; padding-left: 68px; position: relative; letter-spacing: -.35px; }
.fold svg { width: 15px; height: 14px; margin-right: 13px; }
.fold::before { content: ""; position: absolute; left: 41px; top: 10px; width: 18px; border-top: 1px dotted #666; }
.open::after, .m::after { content: ""; position: absolute; left: 35px; top: 4px; width: 11px; height: 11px; border: 1px solid #666; background: linear-gradient(#000, #000) center / 7px 1px no-repeat, #fff; }
.kids { position: relative; }
.kids::before { content: ""; position: absolute; left: 75px; top: 0; bottom: 0; border-left: 1px dotted #666; }
.m { height: 18px; display: flex; align-items: center; padding-left: 103px; position: relative; }
.m svg { width: 15px; height: 15px; margin-right: 11px; }
.m::before { content: ""; position: absolute; left: 76px; top: 10px; width: 17px; border-top: 1px dotted #666; }
.m::after { left: 70px; background: linear-gradient(#000, #000) center / 7px 1px no-repeat, linear-gradient(#000, #000) center / 1px 7px no-repeat, #fff; }
.m svg.bd { position: absolute; left: 116px; top: 2px; width: 10px; height: 10px; }
.m span { padding: 0 1px; line-height: 16px; border: 1px solid transparent; }
.sel span { border-color: #0078d7; }
.vs { width: 17px; background: #f0f0f0; color: #555; display: flex; flex-direction: column; align-items: center; padding: 1px 0; }
.vs svg, .hs svg { width: 15px; height: 15px; }
.vs .end { margin-top: auto; }
.thumb { background: #cdcdcd; }
.t1 { width: 15px; height: 382px; margin-top: 91px; }
.hs { height: 17px; background: #f0f0f0; color: #555; display: flex; align-items: center; justify-content: space-between; }
.h1 { padding: 0 17px 0 1px; }
.t2 { width: 101px; height: 15px; margin-right: 18px; }

.desk { flex: 1; }
.dbar { height: 30px; background: #f0f0f0; border-top: 1px solid #a0a0a0; box-shadow: inset 0 1px #fff; display: flex; align-items: center; padding: 0 0 1px 5px; }
.mp { width: 245px; }
.mp svg { margin: 0 3px; }
.frame { height: 624px; border: solid #696969; border-width: 2px 0 0 2px; border-right: 1px solid #e3e3e3; border-bottom: 1px solid #e3e3e3; }
.canvasrow { display: flex; height: 604px; }
.canvas { background: #c0c0c0; }
.v2 { flex: 1; }
.t3 { width: 15px; height: 115px; margin-top: 1px; }
.h2 { padding: 0 18px 0 1px; justify-content: flex-start; }
.t4 { width: 461px; height: 15px; margin-left: 1px; }
.h2 svg:last-child { margin-left: auto; }
.wm { font: italic bold 19px "Liberation Serif", serif; fill: #c0c0c0; }
.wm.hi { fill: #686868; }
.wm.lo { fill: #f4f4f4; }
.lbl { font: 12px "Liberation Sans", sans-serif; fill: #fff; }
.sqt { font: bold 20px "Liberation Sans", sans-serif; fill: #0068c8; }

.output { height: 71px; margin-top: 7px; background: #f0f0f0; display: flex; padding: 0 2px 2px 1px; flex: none; }
.oside { width: 19px; display: flex; flex-direction: column; align-items: center; padding-top: 2px; }
.vlines { width: 6px; flex: 1; margin-top: 3px; border: solid #a0a0a0; border-width: 0 1px; }
.obox { flex: 1; border: solid #696969; border-width: 2px 0 0 2px; }
.otop { display: flex; height: 49px; background: #fff; }
.otop p { margin: 0; flex: 1; padding: 0 1px; font: 12px/15px "Liberation Sans", sans-serif; letter-spacing: -.63px; }
.dim { color: #bbb; }
.tabs { display: flex; height: 18px; border-bottom: 1px solid #a0a0a0; font: 12px/17px "Liberation Sans", sans-serif; letter-spacing: -.5px; background: #f0f0f0; }
.nb { width: 18px; height: 17px; padding: 2px 1px; border: 1px solid #fff; border-right-color: #777; border-bottom-color: #777; background: #f0f0f0; }
.sp { width: 8px; height: 17px; }
.sp.w { background: #fff; }
.tabs span { border-top: 1px solid #000; padding-left: 1px; flex: none; }
.tabs .act { background: #fff; border-color: #fff; padding-left: 2px; }
.rest { flex: 1; border-top: 1px solid #000; border-right: 1px solid #000; }
.split { width: 4px; border-right: 2px solid #444; }
.track { width: 153px; background: repeating-conic-gradient(#fff 0 25%, #f0f0f0 0 50%) 0 0 / 2px 2px; }

.status { height: 23px; padding-top: 4px; background: linear-gradient(#fff 3px, #f0f0f0 3px); display: flex; flex: none; letter-spacing: -.2px; }
.status span { height: 19px; border: 1px solid #a0a0a0; line-height: 17px; padding-left: 1px; }
.p0 { width: 1330px; margin-right: 10px; }
.p1 { width: 29px; margin-right: 2px; }
.p2 { width: 34px; margin-right: 2px; }
.p3 { width: 33px; }

.taskbar { height: 40px; background: #000; color: #fff; display: flex; flex: none; }
.sys { width: 48px; display: flex; align-items: center; justify-content: center; }
.app { width: 49px; height: 40px; display: flex; align-items: center; justify-content: center; background: linear-gradient(#76b9ed, #76b9ed) center bottom / 40px 2px no-repeat; }
.first { margin-left: 2px; }
.cur { background: linear-gradient(#76b9ed, #76b9ed) center bottom / 48px 2px no-repeat, #333; }
.pdf { font: bold 6px "Liberation Sans", sans-serif; text-anchor: middle; }
.pp { font: bold 12px "Liberation Sans", sans-serif; fill: #fff; text-anchor: middle; }
.sql { font: 6px "DejaVu Sans Mono", monospace; fill: #fff; }
.tray { margin-left: auto; display: flex; align-items: center; gap: 6px; margin-right: 11px; }
.tray svg { width: 18px; height: 18px; }
.clock { width: 50px; display: flex; flex-direction: column; align-items: center; padding-top: 2px; letter-spacing: -.4px; }
.note { margin: 11px 19px 0 18px; }
.peek { width: 5px; border-left: 1px solid #555; }
```
